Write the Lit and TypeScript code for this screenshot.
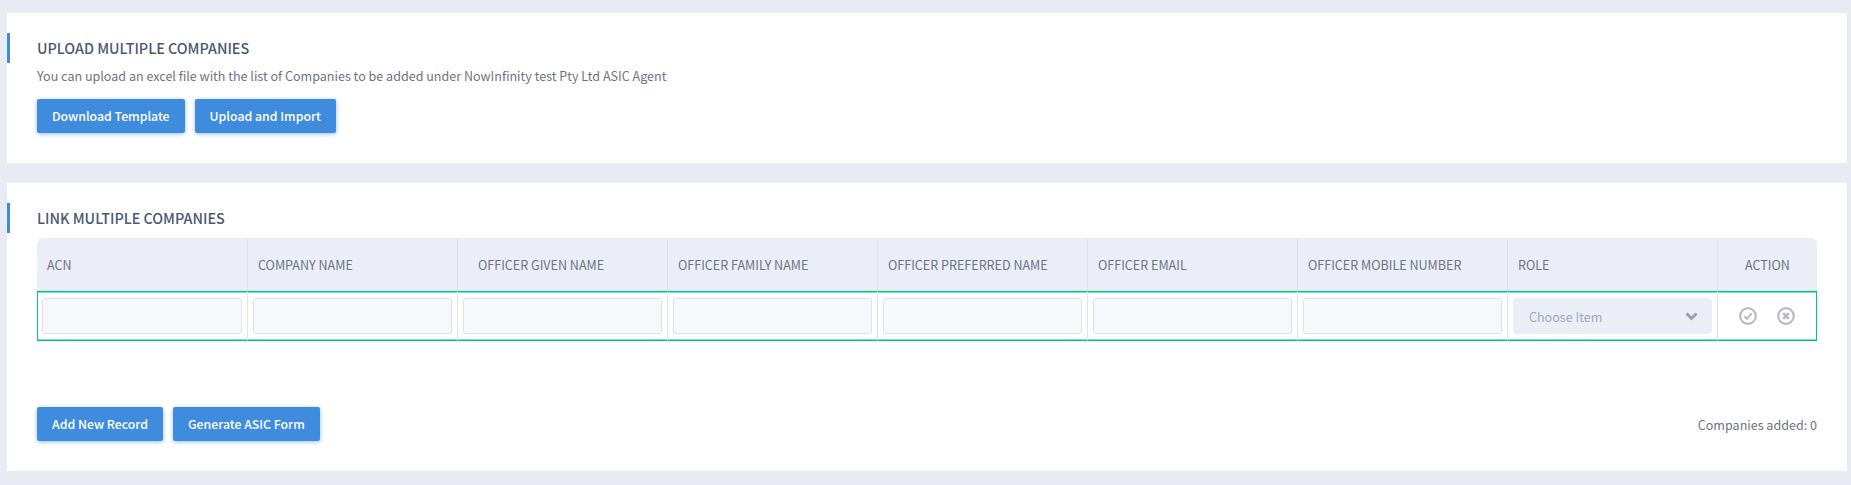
import { LitElement, html, css, svg } from "lit";
import { customElement } from "lit/decorators.js";

const HEADERS: [string, string][] = [
  ["ACN", ""],
  ["COMPANY NAME", ""],
  ["OFFICER GIVEN NAME", "wide"],
  ["OFFICER FAMILY NAME", ""],
  ["OFFICER PREFERRED NAME", ""],
  ["OFFICER EMAIL", ""],
  ["OFFICER MOBILE NUMBER", ""],
  ["ROLE", ""],
  ["ACTION", "center"],
];

@customElement("app-root")
export class AppRoot extends LitElement {
  static styles = css`
    :host {
      display: block;
      min-height: 485px;
      background: #e8ebf4;
      font-family: "Noto Sans CJK SC", "Noto Sans", sans-serif;
      color: #6b6f80;
      font-size: 12.55px;
      box-sizing: border-box;
      padding: 13px 4px 14px 7px;
    }
    * { box-sizing: border-box; }
    .card {
      background: #fff;
      padding: 20px 30px 0 30px;
    }
    .card + .card { margin-top: 20px; }
    .upload { height: 150px; }
    .link { height: 288px; display: flex; flex-direction: column; }
    .title {
      margin: 0 0 0 -30px;
      padding-left: 27px;
      height: 30px;
      border-left: 3px solid #3f8cde;
      font-size: 14.35px;
      line-height: 29px;
      font-weight: 500;
      color: #4a5873;
    }
    .sub {
      margin: 3px 0 0;
      line-height: 20px;
      font-size: 12.55px;
      color: #6f7380;
    }
    .btns { display: flex; gap: 10px; }
    .upload .btns { margin-top: 13px; }
    .btn {
      width: var(--w, auto);
      height: 34px;
      padding: 0 15px;
      border: 0;
      border-radius: 2px;
      background: #3f8cde;
      color: #fff;
      font: 500 12.3px/34px "Noto Sans CJK SC", "Noto Sans", sans-serif;
      box-shadow: 0 1px 4px rgba(63, 140, 222, 0.55);
    }
    .grid {
      display: grid;
      grid-template-columns: repeat(8, 210px) 100px;
      margin: 5px 0 0;
      width: 1780px;
    }
    .th {
      height: 53px;
      background: #ebeef6;
      padding: 0 10px;
      display: flex;
      align-items: center;
      color: #6e7283;
      border-left: 1px solid #dfe3ec;
      border-bottom: 1px solid #dfe3ec;
    }
    .th.first { border-top-left-radius: 6px; border-left: 0; }
    .th.last { border-top-right-radius: 6px; }
    .th.wide { padding-left: 20px; }
    .th.center { justify-content: center; }
    .td {
      height: 50px;
      padding: 6px 5px 6px 5px;
      border-top: 1px solid #00c389;
      border-bottom: 1px solid #00c389;
      border-left: 1px solid #dfe3ec;
      box-shadow: inset 0 1px 0 rgba(0, 195, 137, 0.5), inset 0 -1px 0 rgba(0, 195, 137, 0.5);
    }
    .td.first { border-left: 1px solid #00c389; padding-left: 4px; }
    .td.last {
      border-right: 1px solid #00c389;
      display: flex;
      align-items: center;
      justify-content: center;
      gap: 20px;
      padding: 0 0 1px 0;
    }
    input {
      display: block;
      width: 100%;
      height: 36px;
      background: #f7f8fc;
      border: 1px solid #dfe2ec;
      border-radius: 3px;
      outline: none;
    }
    .select {
      height: 36px;
      border-radius: 4px;
      background: #ebeef6;
      padding: 0 14px 0 16px;
      display: flex;
      align-items: center;
      justify-content: space-between;
      color: #a3a6bb;
    }
    .chev { width: 13px; height: 9px; display: block; }
    .ico { width: 18px; height: 18px; display: block; }
    .foot {
      margin-top: auto;
      padding-bottom: 30px;
      display: flex;
      align-items: center;
      justify-content: space-between;
    }
    .count { color: #6f7380; }
  `;

  private circle(inner: unknown) {
    return html`<svg class="ico" viewBox="0 0 18 18" fill="none" stroke="#b9bac6" stroke-width="2.2">
      <circle cx="9" cy="9" r="7.8"></circle>${inner}
    </svg>`;
  }

  render() {
    return html`
      <section class="card upload">
        <h2 class="title">UPLOAD MULTIPLE COMPANIES</h2>
        <p class="sub">You can upload an excel file with the list of Companies to be added under NowInfinity test Pty Ltd ASIC Agent</p>
        <div class="btns">
          <button class="btn">Download Template</button>
          <button class="btn">Upload and Import</button>
        </div>
      </section>
      <section class="card link">
        <h2 class="title">LINK MULTIPLE COMPANIES</h2>
        <div class="grid">
          ${HEADERS.map(
            ([t, c], i) => html`<div class="th ${c} ${i === 0 ? "first" : ""} ${i === 8 ? "last" : ""}">${t}</div>`
          )}
          ${[0, 1, 2, 3, 4, 5, 6].map(
            (i) => html`<div class="td ${i === 0 ? "first" : ""}"><input type="text" /></div>`
          )}
          <div class="td">
            <div class="select">
              <span>Choose Item</span>
              <svg class="chev" viewBox="0 0 13 9" fill="none" stroke="#9a9db3" stroke-width="3">
                <path d="M1.5 1.5 6.5 6.5 11.5 1.5"></path>
              </svg>
            </div>
          </div>
          <div class="td last">
            ${this.circle(svg`<path d="M5.3 9.2 8 11.7 12.7 6.4" stroke-width="2"></path>`)}
            ${this.circle(svg`<path d="M6.2 6.2 11.8 11.8M11.8 6.2 6.2 11.8" stroke-width="2.6"></path>`)}
          </div>
        </div>
        <div class="foot">
          <div class="btns">
            <button class="btn">Add New Record</button>
            <button class="btn">Generate ASIC Form</button>
          </div>
          <span class="count">Companies added: 0</span>
        </div>
      </section>
    `;
  }
}
